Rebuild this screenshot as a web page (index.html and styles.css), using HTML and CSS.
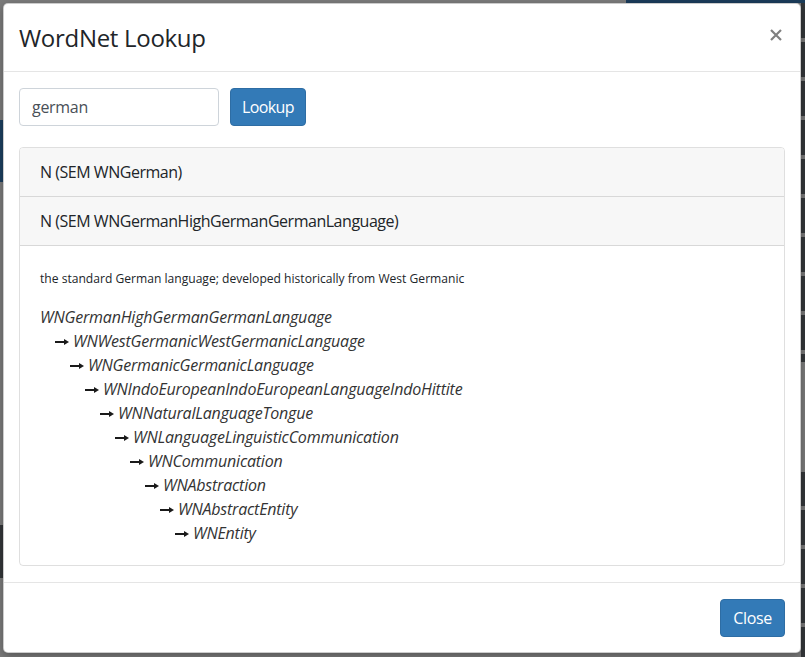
FILE: index.html
```html
<!DOCTYPE html>
<html lang="en">
<head>
    <meta charset="UTF-8">
    <meta name="viewport" content="width=device-width, initial-scale=1.0">
    <title>WordNet Lookup</title>
    <link rel="stylesheet" href="styles.css">
</head>
<body>
    <div class="modal-backdrop">
        <div class="modal-content">
            <div class="modal-header">
                <h4 class="modal-title">WordNet Lookup</h4>
                <button class="close" type="button" aria-label="Close">
                    <svg width="12" height="12" viewBox="0 0 12 12">
                        <path d="M1 1 L11 11 M11 1 L1 11" stroke="#808080" stroke-width="2.2" fill="none" />
                    </svg>
                </button>
            </div>

            <div class="modal-body">
                <div class="lookup-form">
                    <input type="text" class="form-control" value="german" />
                    <button class="btn btn-primary btn-lookup" type="button">Lookup</button>
                </div>

                <div class="accordion">
                    <div class="card-header">N (SEM WNGerman)</div>
                    <div class="card-header">N (SEM WNGermanHighGermanGermanLanguage)</div>
                    <div class="card-body">
                        <p class="gloss">the standard German language; developed historically from West Germanic</p>
                        <ul class="hypernyms">
                            <li class="lvl-0"><em>WNGermanHighGermanGermanLanguage</em></li>
                            <li class="lvl-1"><span class="arrow"></span><em>WNWestGermanicWestGermanicLanguage</em></li>
                            <li class="lvl-2"><span class="arrow"></span><em>WNGermanicGermanicLanguage</em></li>
                            <li class="lvl-3"><span class="arrow"></span><em>WNIndoEuropeanIndoEuropeanLanguageIndoHittite</em></li>
                            <li class="lvl-4"><span class="arrow"></span><em>WNNaturalLanguageTongue</em></li>
                            <li class="lvl-5"><span class="arrow"></span><em>WNLanguageLinguisticCommunication</em></li>
                            <li class="lvl-6"><span class="arrow"></span><em>WNCommunication</em></li>
                            <li class="lvl-7"><span class="arrow"></span><em>WNAbstraction</em></li>
                            <li class="lvl-8"><span class="arrow"></span><em>WNAbstractEntity</em></li>
                            <li class="lvl-9"><span class="arrow"></span><em>WNEntity</em></li>
                        </ul>
                    </div>
                </div>
            </div>

            <div class="modal-footer">
                <button class="btn btn-primary" type="button">Close</button>
            </div>
        </div>
    </div>
</body>
</html>
```

FILE: styles.css
```css
html, body {
    margin: 0;
    height: 657px;
    overflow: hidden;
}
body {
    font-family: 'Open Sans', 'Noto Sans', Arial, sans-serif;
    color: #212529;
    background:
        linear-gradient(#1b3c5a, #1b3c5a) 626px 0 / 180px 3px no-repeat,
        linear-gradient(#1c3f5f, #1c3f5f) 0 120px / 3px 62px no-repeat,
        linear-gradient(#333639, #333639) 0 525px / 3px 53px no-repeat,
        linear-gradient(#7b7b7b, #7b7b7b) 801px 362px / 4px 110px no-repeat,
        repeating-linear-gradient(#333639 0 35px, #777 35px 39px) 801px 3px / 4px 654px no-repeat,
        #7b7b7b;
}
.modal-backdrop {
    padding: 3px 4px 0 3px;
}
.modal-content {
    background: #fff;
    border: 1px solid rgba(0,0,0,0.2);
    border-radius: 5px;
    box-shadow: 0 3px 9px rgba(0,0,0,0.3);
}
.modal-header {
    display: flex;
    align-items: flex-start;
    justify-content: space-between;
    padding: 15px;
    border-bottom: 1px solid #e5e5e5;
}
.modal-title {
    margin: 0;
    font-size: 24px;
    font-weight: 400;
    line-height: 37px;
    letter-spacing: -0.3px;
}
.close {
    display: flex;
    margin: 10px 3px 0 0;
    padding: 0;
    background: none;
    border: none;
    cursor: pointer;
}
.modal-body {
    padding: 16px 15px;
}
.lookup-form {
    display: flex;
    gap: 11px;
    margin-bottom: 21px;
}
.form-control {
    width: 200px;
    box-sizing: border-box;
    height: 38px;
    padding: 6px 12px;
    font: inherit;
    font-size: 16px;
    letter-spacing: -0.3px;
    color: #495057;
    border: 1px solid #ced4da;
    border-radius: 4px;
}
.btn {
    height: 38px;
    padding: 6px 12px;
    font: inherit;
    font-size: 16px;
    line-height: 24px;
    letter-spacing: -0.3px;
    border: 1px solid transparent;
    border-radius: 4px;
    cursor: pointer;
}
.btn-lookup {
    padding: 6px 11px;
    letter-spacing: -0.6px;
}
.btn-primary {
    background: #337ab7;
    border-color: #2e6da4;
    color: #fff;
}
.accordion {
    border: 1px solid rgba(0,0,0,0.125);
    border-radius: 4px;
    overflow: hidden;
}
.card-header {
    padding: 12px 20px;
    font-size: 16px;
    line-height: 24px;
    letter-spacing: -0.47px;
    background: #f7f7f7;
    border-bottom: 1px solid rgba(0,0,0,0.125);
}
.card-body {
    padding: 20px;
}
.gloss {
    margin: 3px 0 17px;
    font-size: 12.1px;
    line-height: 19px;
}
.hypernyms {
    list-style: none;
    margin: 0;
    padding: 0;
    font-size: 16px;
    line-height: 24px;
    letter-spacing: -0.2px;
    color: #333;
}
.hypernyms li {
    display: flex;
    align-items: center;
    white-space: nowrap;
}
.arrow {
    position: relative;
    width: 14px;
    height: 6px;
    margin: 1px 4px 0 0;
    background: linear-gradient(#1a1a1a, #1a1a1a) 0 2px / 10px 2.4px no-repeat;
}
.arrow::after {
    content: "";
    position: absolute;
    right: 0;
    top: 0;
    border-left: 5px solid #1a1a1a;
    border-top: 3px solid transparent;
    border-bottom: 3px solid transparent;
}
.lvl-1 { padding-left: 15px; }
.lvl-2 { padding-left: 30px; }
.lvl-3 { padding-left: 45px; }
.lvl-4 { padding-left: 60px; }
.lvl-5 { padding-left: 75px; }
.lvl-6 { padding-left: 90px; }
.lvl-7 { padding-left: 105px; }
.lvl-8 { padding-left: 120px; }
.lvl-9 { padding-left: 135px; }
.modal-footer {
    display: flex;
    justify-content: flex-end;
    padding: 16px 15px 15px;
    border-top: 1px solid #e5e5e5;
}
```
